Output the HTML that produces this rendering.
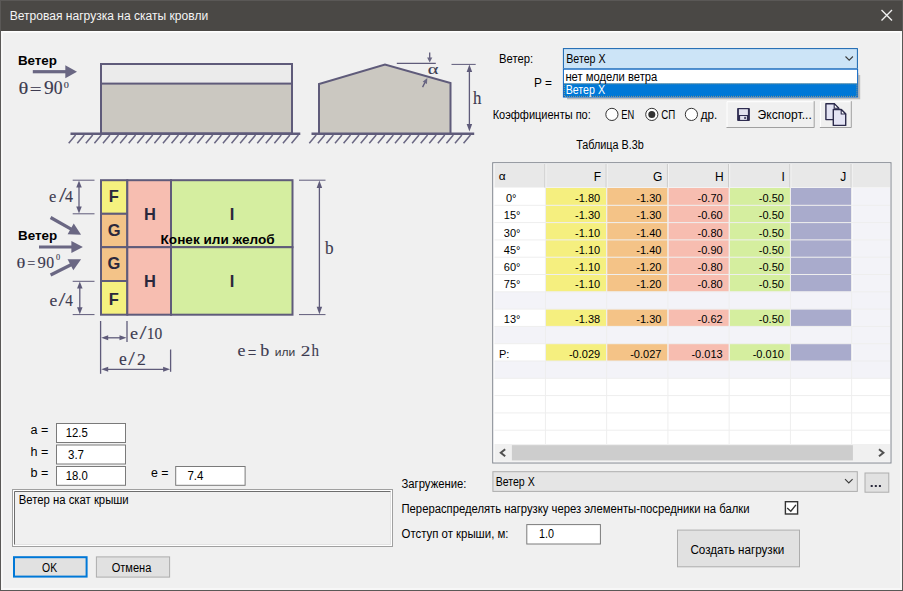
<!DOCTYPE html>
<html><head><meta charset="utf-8">
<style>
*{margin:0;padding:0;box-sizing:border-box}
html,body{width:903px;height:591px;overflow:hidden;background:#f0f0f0}
body{position:relative;font-family:"Liberation Sans",sans-serif;font-size:12px;color:#000}
svg{position:absolute;left:0;top:0}
</style></head><body>
<svg width="903" height="591" viewBox="0 0 903 591">
<rect x="0" y="0" width="903" height="591" fill="#f0f0f0"/>
<rect x="0" y="0" width="903" height="31" fill="#4a4845"/>
<rect x="0" y="0" width="903" height="1" fill="#5a5856"/>
<rect x="0" y="0" width="1" height="591" fill="#5a5856"/>
<rect x="902" y="0" width="1" height="591" fill="#5a5856"/>
<rect x="0" y="590" width="903" height="1" fill="#5a5856"/>
<rect x="1" y="31" width="901" height="1.5" fill="#ffffff"/>
<rect x="1" y="31" width="2" height="559" fill="#f7f7f7"/>
<rect x="900" y="31" width="2" height="559" fill="#f7f7f7"/>
<rect x="1" y="588" width="901" height="2" fill="#f7f7f7"/>
<text x="9.7" y="19.9" font-family="Liberation Sans" font-size="12" fill="#f4f4f4" textLength="198.5" lengthAdjust="spacingAndGlyphs">Ветровая нагрузка на скаты кровли</text>
<path d="M881.5 10 L892 20.5 M892 10 L881.5 20.5" stroke="#f0f0f0" stroke-width="1.4"/>
<text x="17.9" y="65" font-family="Liberation Sans" font-size="13" fill="#000" font-weight="bold" textLength="39.1" lengthAdjust="spacingAndGlyphs">Ветер</text>
<rect x="32.8" y="70.1" width="33.5" height="3.2" fill="#6a6783"/>
<path d="M77.00 71.70 L65.30 78.20 L65.30 65.20 Z" fill="#6a6783"/>
<text transform="translate(18.38,94.43) scale(1.214,1)" font-family="Liberation Serif" font-size="16.90" fill="#3d3b50" stroke="#3d3b50" stroke-width="0.12">θ</text>
<text transform="translate(29.86,95.06) scale(1.272,1)" font-family="Liberation Serif" font-size="16.40" fill="#3d3b50" stroke="#3d3b50" stroke-width="0.12">=</text>
<text transform="translate(43.91,94.42) scale(1.091,1)" font-family="Liberation Serif" font-size="17.91" fill="#3d3b50" stroke="#3d3b50" stroke-width="0.12">9</text>
<text transform="translate(53.80,94.42) scale(0.991,1)" font-family="Liberation Serif" font-size="17.78" fill="#3d3b50" stroke="#3d3b50" stroke-width="0.12">0</text>
<text transform="translate(63.69,87.62) scale(1.355,1)" font-family="Liberation Serif" font-size="7.56" fill="#3d3b50" stroke="#3d3b50" stroke-width="0.12">0</text>
<rect x="101" y="64" width="191" height="69.5" fill="#cbc8c1" stroke="#5f5b7a" stroke-width="2"/>
<rect x="101" y="64" width="191" height="19.6" fill="#ebebeb" stroke="#5f5b7a" stroke-width="2"/>
<line x1="70.5" y1="133.8" x2="300.3" y2="133.8" stroke="#5f5b7a" stroke-width="2.6"/>
<path d="M75.60 135.00 L68.70 143.30 M84.17 135.00 L77.27 143.30 M92.74 135.00 L85.84 143.30 M101.31 135.00 L94.41 143.30 M109.88 135.00 L102.98 143.30 M118.45 135.00 L111.55 143.30 M127.02 135.00 L120.12 143.30 M135.59 135.00 L128.69 143.30 M144.16 135.00 L137.26 143.30 M152.73 135.00 L145.83 143.30 M161.30 135.00 L154.40 143.30 M169.87 135.00 L162.97 143.30 M178.44 135.00 L171.54 143.30 M187.01 135.00 L180.11 143.30 M195.58 135.00 L188.68 143.30 M204.15 135.00 L197.25 143.30 M212.72 135.00 L205.82 143.30 M221.29 135.00 L214.39 143.30 M229.86 135.00 L222.96 143.30 M238.43 135.00 L231.53 143.30 M247.00 135.00 L240.10 143.30 M255.57 135.00 L248.67 143.30 M264.14 135.00 L257.24 143.30 M272.71 135.00 L265.81 143.30 M281.28 135.00 L274.38 143.30 M289.85 135.00 L282.95 143.30 M298.42 135.00 L291.52 143.30 " stroke="#6a6783" stroke-width="1.5" fill="none"/>
<path d="M319 133.5 L319 84 L385 64.5 L450.5 83 L450.5 133.5" fill="#cbc8c1" stroke="#5f5b7a" stroke-width="2"/>
<line x1="311.5" y1="133.8" x2="474.2" y2="133.8" stroke="#5f5b7a" stroke-width="2.6"/>
<path d="M316.20 135.00 L309.30 143.30 M324.77 135.00 L317.87 143.30 M333.34 135.00 L326.44 143.30 M341.91 135.00 L335.01 143.30 M350.48 135.00 L343.58 143.30 M359.05 135.00 L352.15 143.30 M367.62 135.00 L360.72 143.30 M376.19 135.00 L369.29 143.30 M384.76 135.00 L377.86 143.30 M393.33 135.00 L386.43 143.30 M401.90 135.00 L395.00 143.30 M410.47 135.00 L403.57 143.30 M419.04 135.00 L412.14 143.30 M427.61 135.00 L420.71 143.30 M436.18 135.00 L429.28 143.30 M444.75 135.00 L437.85 143.30 M453.32 135.00 L446.42 143.30 M461.89 135.00 L454.99 143.30 M470.46 135.00 L463.56 143.30 " stroke="#6a6783" stroke-width="1.5" fill="none"/>
<line x1="396.8" y1="63.4" x2="435.8" y2="63.4" stroke="#5f5b7a" stroke-width="1.3"/>
<line x1="429.7" y1="52.6" x2="429.7" y2="58.5" stroke="#5f5b7a" stroke-width="1.3"/>
<path d="M429.70 62.40 L427.10 57.40 L432.30 57.40 Z" fill="#6a6783"/>
<line x1="422.6" y1="87.1" x2="425" y2="82.4" stroke="#5f5b7a" stroke-width="1.3"/>
<path d="M427.30 78.00 L426.96 83.99 L422.68 81.83 Z" fill="#6a6783"/>
<text transform="translate(427.69,73.95) scale(1.386,1)" font-family="Liberation Serif" font-size="14.58" fill="#3d3b50" stroke="#3d3b50" stroke-width="0.12">α</text>
<line x1="451.5" y1="64.4" x2="475.7" y2="64.4" stroke="#5f5b7a" stroke-width="1"/>
<line x1="469.40" y1="70.60" x2="469.40" y2="125.50" stroke="#5f5b7a" stroke-width="1.3"/>
<path d="M469.40 131.50 L466.65 124.00 L472.15 124.00 Z" fill="#5f5b7a"/>
<path d="M469.40 64.60 L472.15 72.10 L466.65 72.10 Z" fill="#5f5b7a"/>
<text transform="translate(473.03,103.50) scale(0.929,1)" font-family="Liberation Serif" font-size="18.13" fill="#3d3b50" stroke="#3d3b50" stroke-width="0.12">h</text>
<g stroke="#5f5b7a" stroke-width="2">
<rect x="101" y="180.2" width="26.3" height="33.6" fill="#f5f17f"/>
<rect x="101" y="213.8" width="26.3" height="33.4" fill="#f3c388"/>
<rect x="101" y="247.2" width="26.3" height="33.8" fill="#f3c388"/>
<rect x="101" y="281" width="26.3" height="33.7" fill="#f5f17f"/>
<rect x="127.3" y="180.2" width="43.7" height="67" fill="#f7beb1"/>
<rect x="127.3" y="247.2" width="43.7" height="67.5" fill="#f7beb1"/>
<rect x="171" y="180.2" width="121.5" height="67" fill="#d5eea0"/>
<rect x="171" y="247.2" width="121.5" height="67.5" fill="#d5eea0"/>
</g>
<text x="113.9" y="202.4" font-family="Liberation Sans" font-size="16.5" fill="#2a283c" font-weight="bold" text-anchor="middle">F</text>
<text x="114.1" y="235.9" font-family="Liberation Sans" font-size="16.5" fill="#2a283c" font-weight="bold" text-anchor="middle">G</text>
<text x="114.0" y="269.4" font-family="Liberation Sans" font-size="16.5" fill="#2a283c" font-weight="bold" text-anchor="middle">G</text>
<text x="113.9" y="304.7" font-family="Liberation Sans" font-size="16.5" fill="#2a283c" font-weight="bold" text-anchor="middle">F</text>
<text x="149.9" y="220" font-family="Liberation Sans" font-size="16.5" fill="#2a283c" font-weight="bold" text-anchor="middle">H</text>
<text x="149.9" y="287.4" font-family="Liberation Sans" font-size="16.5" fill="#2a283c" font-weight="bold" text-anchor="middle">H</text>
<text x="232" y="220.1" font-family="Liberation Sans" font-size="16.5" fill="#2a283c" font-weight="bold" text-anchor="middle">I</text>
<text x="232" y="287.3" font-family="Liberation Sans" font-size="16.5" fill="#2a283c" font-weight="bold" text-anchor="middle">I</text>
<text x="160.6" y="243.7" font-family="Liberation Sans" font-size="12.8" fill="#000" font-weight="bold" textLength="114" lengthAdjust="spacingAndGlyphs">Конек или желоб</text>
<line x1="72.7" y1="180.2" x2="94.5" y2="180.2" stroke="#5f5b7a" stroke-width="1"/>
<line x1="72.7" y1="213.8" x2="94.5" y2="213.8" stroke="#5f5b7a" stroke-width="1"/>
<line x1="79.00" y1="186.10" x2="79.00" y2="207.90" stroke="#5f5b7a" stroke-width="1.3"/>
<path d="M79.00 213.50 L76.25 206.50 L81.75 206.50 Z" fill="#5f5b7a"/>
<path d="M79.00 180.50 L81.75 187.50 L76.25 187.50 Z" fill="#5f5b7a"/>
<text transform="translate(49.04,202.42) scale(0.942,1)" font-family="Liberation Serif" font-size="17.50" fill="#3d3b50" stroke="#3d3b50" stroke-width="0.12">e</text>
<text transform="translate(59.00,202.19) scale(1.271,1)" font-family="Liberation Serif" font-size="20.60" fill="#3d3b50" stroke="#3d3b50" stroke-width="0.12">/</text>
<text transform="translate(64.88,202.40) scale(0.964,1)" font-family="Liberation Serif" font-size="16.52" fill="#3d3b50" stroke="#3d3b50" stroke-width="0.12">4</text>
<line x1="72.7" y1="281.3" x2="94.5" y2="281.3" stroke="#5f5b7a" stroke-width="1"/>
<line x1="72.7" y1="314.6" x2="94.5" y2="314.6" stroke="#5f5b7a" stroke-width="1"/>
<line x1="79.80" y1="287.20" x2="79.80" y2="308.70" stroke="#5f5b7a" stroke-width="1.3"/>
<path d="M79.80 314.30 L77.05 307.30 L82.55 307.30 Z" fill="#5f5b7a"/>
<path d="M79.80 281.60 L82.55 288.60 L77.05 288.60 Z" fill="#5f5b7a"/>
<text transform="translate(49.50,306.33) scale(1.028,1)" font-family="Liberation Serif" font-size="17.08" fill="#3d3b50" stroke="#3d3b50" stroke-width="0.12">e</text>
<text transform="translate(58.60,306.32) scale(1.401,1)" font-family="Liberation Serif" font-size="17.91" fill="#3d3b50" stroke="#3d3b50" stroke-width="0.12">/</text>
<text transform="translate(65.19,306.30) scale(0.960,1)" font-family="Liberation Serif" font-size="15.91" fill="#3d3b50" stroke="#3d3b50" stroke-width="0.12">4</text>
<text x="18.1" y="239.9" font-family="Liberation Sans" font-size="12.5" fill="#000" font-weight="bold" textLength="39.1" lengthAdjust="spacingAndGlyphs">Ветер</text>
<line x1="39" y1="247" x2="72" y2="247" stroke="#6a6783" stroke-width="3.2"/>
<path d="M82.90 247.00 L71.40 253.00 L71.40 241.00 Z" fill="#6a6783"/>
<line x1="50.6" y1="217.5" x2="72" y2="229.7" stroke="#6a6783" stroke-width="3.2"/>
<path d="M81.10 234.80 L67.58 234.32 L73.75 223.44 Z" fill="#6a6783"/>
<line x1="50.6" y1="275" x2="72" y2="264.3" stroke="#6a6783" stroke-width="3.2"/>
<path d="M81.10 259.20 L73.32 270.27 L67.57 259.17 Z" fill="#6a6783"/>
<text transform="translate(16.47,267.65) scale(1.214,1)" font-family="Liberation Serif" font-size="15.21" fill="#3d3b50" stroke="#3d3b50" stroke-width="0.12">θ</text>
<text transform="translate(27.19,267.82) scale(0.934,1)" font-family="Liberation Serif" font-size="15.20" fill="#3d3b50" stroke="#3d3b50" stroke-width="0.12">=</text>
<text transform="translate(37.60,267.64) scale(1.039,1)" font-family="Liberation Serif" font-size="16.12" fill="#3d3b50" stroke="#3d3b50" stroke-width="0.12">9</text>
<text transform="translate(46.37,267.64) scale(0.982,1)" font-family="Liberation Serif" font-size="16.00" fill="#3d3b50" stroke="#3d3b50" stroke-width="0.12">0</text>
<text transform="translate(56.07,260.23) scale(1.125,1)" font-family="Liberation Serif" font-size="7.41" fill="#3d3b50" stroke="#3d3b50" stroke-width="0.12">0</text>
<line x1="299" y1="180.2" x2="325.5" y2="180.2" stroke="#5f5b7a" stroke-width="1"/>
<line x1="299" y1="314.6" x2="325.5" y2="314.6" stroke="#5f5b7a" stroke-width="1"/>
<line x1="319.40" y1="186.50" x2="319.40" y2="308.30" stroke="#5f5b7a" stroke-width="1.3"/>
<path d="M319.40 314.30 L316.65 306.80 L322.15 306.80 Z" fill="#5f5b7a"/>
<path d="M319.40 180.50 L322.15 188.00 L316.65 188.00 Z" fill="#5f5b7a"/>
<text transform="translate(324.90,254.12) scale(0.953,1)" font-family="Liberation Serif" font-size="18.01" fill="#3d3b50" stroke="#3d3b50" stroke-width="0.12">b</text>
<line x1="100.6" y1="321" x2="100.6" y2="373.8" stroke="#5f5b7a" stroke-width="1.3"/>
<line x1="127" y1="321" x2="127" y2="341.9" stroke="#5f5b7a" stroke-width="1.3"/>
<line x1="106.80" y1="337.80" x2="120.90" y2="337.80" stroke="#5f5b7a" stroke-width="1.3"/>
<path d="M126.50 337.80 L119.50 340.30 L119.50 335.30 Z" fill="#5f5b7a"/>
<path d="M101.20 337.80 L108.20 335.30 L108.20 340.30 Z" fill="#5f5b7a"/>
<text transform="translate(129.88,338.82) scale(1.023,1)" font-family="Liberation Serif" font-size="17.71" fill="#3d3b50" stroke="#3d3b50" stroke-width="0.12">e</text>
<text transform="translate(139.50,338.82) scale(1.409,1)" font-family="Liberation Serif" font-size="18.06" fill="#3d3b50" stroke="#3d3b50" stroke-width="0.12">/</text>
<text transform="translate(146.78,338.80) scale(0.938,1)" font-family="Liberation Serif" font-size="16.52" fill="#3d3b50" stroke="#3d3b50" stroke-width="0.12">1</text>
<text transform="translate(154.58,338.84) scale(0.941,1)" font-family="Liberation Serif" font-size="16.44" fill="#3d3b50" stroke="#3d3b50" stroke-width="0.12">0</text>
<line x1="170.6" y1="349.5" x2="170.6" y2="371.8" stroke="#5f5b7a" stroke-width="1.3"/>
<line x1="106.80" y1="369.30" x2="164.50" y2="369.30" stroke="#5f5b7a" stroke-width="1.3"/>
<path d="M170.10 369.30 L163.10 371.80 L163.10 366.80 Z" fill="#5f5b7a"/>
<path d="M101.20 369.30 L108.20 366.80 L108.20 371.80 Z" fill="#5f5b7a"/>
<text transform="translate(119.00,365.22) scale(0.969,1)" font-family="Liberation Serif" font-size="18.12" fill="#3d3b50" stroke="#3d3b50" stroke-width="0.12">e</text>
<text transform="translate(128.30,365.22) scale(1.309,1)" font-family="Liberation Serif" font-size="18.06" fill="#3d3b50" stroke="#3d3b50" stroke-width="0.12">/</text>
<text transform="translate(137.10,365.40) scale(1.055,1)" font-family="Liberation Serif" font-size="16.82" fill="#3d3b50" stroke="#3d3b50" stroke-width="0.12">2</text>
<text transform="translate(237.39,356.13) scale(1.032,1)" font-family="Liberation Serif" font-size="17.29" fill="#3d3b50" stroke="#3d3b50" stroke-width="0.12">e</text>
<text transform="translate(247.84,358.62) scale(0.779,1)" font-family="Liberation Serif" font-size="19.60" fill="#3d3b50" stroke="#3d3b50" stroke-width="0.12">=</text>
<text transform="translate(260.20,356.13) scale(1.051,1)" font-family="Liberation Serif" font-size="17.16" fill="#3d3b50" stroke="#3d3b50" stroke-width="0.12">b</text>
<text transform="translate(274.86,356.20) scale(1.183,1)" font-family="Liberation Sans" font-size="10.19" fill="#3a3a44" stroke="#3a3a44" stroke-width="0">или</text>
<text transform="translate(300.83,356.30) scale(1.270,1)" font-family="Liberation Serif" font-size="15.15" fill="#3d3b50" stroke="#3d3b50" stroke-width="0.12">2</text>
<text transform="translate(311.55,356.30) scale(0.859,1)" font-family="Liberation Serif" font-size="17.41" fill="#3d3b50" stroke="#3d3b50" stroke-width="0.12">h</text>
<text x="499" y="63.2" font-family="Liberation Sans" font-size="12" fill="#000" textLength="34.1" lengthAdjust="spacingAndGlyphs">Ветер:</text>
<text x="534" y="87.2" font-family="Liberation Sans" font-size="12" fill="#000" textLength="17.9" lengthAdjust="spacingAndGlyphs">P =</text>
<rect x="563.4" y="48.6" width="294" height="20" fill="#cce4f7" stroke="#1464b0" stroke-width="1"/>
<text x="566.2" y="62.8" font-family="Liberation Sans" font-size="12" fill="#000" textLength="39.4" lengthAdjust="spacingAndGlyphs">Ветер X</text>
<path d="M845.5 56.5 L849.2 60.2 L852.9 56.5" fill="none" stroke="#3b3b3b" stroke-width="1.1"/>
<rect x="858" y="75" width="2.2" height="24.3" fill="#000" opacity="0.22"/>
<rect x="567" y="97.3" width="291" height="2" fill="#000" opacity="0.22"/>
<rect x="858" y="73" width="1" height="2" fill="#000" opacity="0.1"/>
<rect x="562.9" y="68.7" width="295" height="28.6" fill="#fff"/>
<rect x="563.4" y="83.3" width="294" height="13.8" fill="#0078d7"/>
<rect x="563.4" y="69.2" width="294.2" height="27.8" fill="none" stroke="#0a64c4" stroke-width="1"/>
<rect x="564.4" y="83.8" width="292.5" height="12.6" fill="none" stroke="#f0b050" stroke-width="0.8" stroke-dasharray="1 1" opacity="0.8"/>
<text x="565.4" y="81.4" font-family="Liberation Sans" font-size="12" fill="#000" textLength="91.9" lengthAdjust="spacingAndGlyphs">нет модели ветра</text>
<text x="565.7" y="94.3" font-family="Liberation Sans" font-size="12" fill="#fff" textLength="39.3" lengthAdjust="spacingAndGlyphs">Ветер X</text>
<text x="492.7" y="119.4" font-family="Liberation Sans" font-size="12" fill="#000" textLength="98.1" lengthAdjust="spacingAndGlyphs">Коэффициенты по:</text>
<circle cx="611.9" cy="114.4" r="6.1" fill="#fff" stroke="#333" stroke-width="1"/>
<text x="621.3" y="118.9" font-family="Liberation Sans" font-size="12" fill="#000" textLength="13" lengthAdjust="spacingAndGlyphs">EN</text>
<circle cx="651.8" cy="114.4" r="6.1" fill="#fff" stroke="#333" stroke-width="1"/>
<circle cx="651.8" cy="114.4" r="3.5" fill="#333"/>
<text x="661.2" y="118.9" font-family="Liberation Sans" font-size="12" fill="#000" textLength="14" lengthAdjust="spacingAndGlyphs">СП</text>
<circle cx="691.4" cy="114.4" r="6.1" fill="#fff" stroke="#333" stroke-width="1"/>
<text x="700.8" y="118.9" font-family="Liberation Sans" font-size="12" fill="#000" textLength="16.5" lengthAdjust="spacingAndGlyphs">др.</text>
<rect x="726.5" y="101.2" width="88.20000000000005" height="26.799999999999997" fill="#f0f0f0"/>
<path d="M727.0 127 L727.0 101.7 L813.7 101.7" stroke="#ffffff" fill="none"/>
<path d="M726.5 127.5 L814.2 127.5 L814.2 101.2" stroke="#a0a0a0" fill="none"/>
<rect x="819.9" y="101.2" width="31.899999999999977" height="26.799999999999997" fill="#f0f0f0"/>
<path d="M820.4 127 L820.4 101.7 L850.8 101.7" stroke="#ffffff" fill="none"/>
<path d="M819.9 127.5 L851.3 127.5 L851.3 101.2" stroke="#a0a0a0" fill="none"/>
<rect x="737.1" y="108.1" width="12.8" height="12.8" rx="0.9" fill="#2e2c50"/>
<rect x="738.9" y="109.2" width="9" height="5.8" fill="#e2e2ee"/>
<rect x="740.1" y="116" width="6.8" height="3.9" fill="#e2e2ee"/>
<rect x="744.3" y="116.8" width="1.5" height="2.2" fill="#2e2c50"/>
<text x="757.6" y="119.4" font-family="Liberation Sans" font-size="12" fill="#000" textLength="54.2" lengthAdjust="spacingAndGlyphs">Экспорт...</text>
<path d="M825.9 103.7 L834.2 103.7 L838.7 108.2 L838.7 119.6 L825.9 119.6 Z" fill="#e4e4f4" stroke="#2c2b4c" stroke-width="1.4" stroke-linejoin="round"/>
<path d="M834.2 103.7 L834.2 108.2 L838.7 108.2 Z" fill="#ffffff" stroke="#2c2b4c" stroke-width="1.1" stroke-linejoin="round"/>
<path d="M833.3 109.5 L841.2 109.5 L845.7 114 L845.7 125.4 L833.3 125.4 Z" fill="#e4e4f4" stroke="#2c2b4c" stroke-width="1.4" stroke-linejoin="round"/>
<path d="M841.2 109.5 L841.2 114 L845.7 114 Z" fill="#ffffff" stroke="#2c2b4c" stroke-width="1.1" stroke-linejoin="round"/>
<text x="576.2" y="148.6" font-family="Liberation Sans" font-size="12" fill="#000" textLength="67.6" lengthAdjust="spacingAndGlyphs">Таблица B.3b</text>
<rect x="492.7" y="162.7" width="398.3" height="300.3" fill="#ffffff" stroke="#828790" stroke-width="1"/>
<rect x="494.5" y="164" width="395.5" height="23.5" fill="#e8e8e8"/>
<rect x="544.4" y="164" width="1" height="23.5" fill="#c8c8c8"/>
<rect x="545.4" y="164" width="1" height="23.5" fill="#f4f4f4"/>
<rect x="605.65" y="164" width="1" height="23.5" fill="#c8c8c8"/>
<rect x="606.65" y="164" width="1" height="23.5" fill="#f4f4f4"/>
<rect x="666.9" y="164" width="1" height="23.5" fill="#c8c8c8"/>
<rect x="667.9" y="164" width="1" height="23.5" fill="#f4f4f4"/>
<rect x="728.15" y="164" width="1" height="23.5" fill="#c8c8c8"/>
<rect x="729.15" y="164" width="1" height="23.5" fill="#f4f4f4"/>
<rect x="789.4" y="164" width="1" height="23.5" fill="#c8c8c8"/>
<rect x="790.4" y="164" width="1" height="23.5" fill="#f4f4f4"/>
<rect x="850.65" y="164" width="1" height="23.5" fill="#c8c8c8"/>
<rect x="851.65" y="164" width="1" height="23.5" fill="#f4f4f4"/>
<text transform="translate(498.82,180.19) scale(1.096,1)" font-family="Liberation Sans" font-size="10.91" fill="#000" stroke="#000" stroke-width="0">α</text>
<text x="601.15" y="180.6" font-family="Liberation Sans" font-size="12" fill="#000" text-anchor="end">F</text>
<text x="662.4" y="180.6" font-family="Liberation Sans" font-size="12" fill="#000" text-anchor="end">G</text>
<text x="723.65" y="180.6" font-family="Liberation Sans" font-size="12" fill="#000" text-anchor="end">H</text>
<text x="784.9" y="180.6" font-family="Liberation Sans" font-size="12" fill="#000" text-anchor="end">I</text>
<text x="846.15" y="180.6" font-family="Liberation Sans" font-size="12" fill="#000" text-anchor="end">J</text>
<rect x="852.65" y="188.00" width="37.35" height="17.30" fill="#f3f3f8"/>
<rect x="545.90" y="188.00" width="60.5" height="17.30" fill="#f5ef7f"/>
<rect x="607.15" y="188.00" width="60.5" height="17.30" fill="#f4c387"/>
<rect x="668.40" y="188.00" width="60.5" height="17.30" fill="#f7bdb0"/>
<rect x="729.65" y="188.00" width="60.5" height="17.30" fill="#d5ee9f"/>
<rect x="790.90" y="188.00" width="60.5" height="17.30" fill="#a9abcc"/>
<rect x="852.65" y="205.30" width="37.35" height="17.30" fill="#f3f3f8"/>
<rect x="545.90" y="205.30" width="60.5" height="17.30" fill="#f5ef7f"/>
<rect x="607.15" y="205.30" width="60.5" height="17.30" fill="#f4c387"/>
<rect x="668.40" y="205.30" width="60.5" height="17.30" fill="#f7bdb0"/>
<rect x="729.65" y="205.30" width="60.5" height="17.30" fill="#d5ee9f"/>
<rect x="790.90" y="205.30" width="60.5" height="17.30" fill="#a9abcc"/>
<rect x="852.65" y="222.60" width="37.35" height="17.30" fill="#f3f3f8"/>
<rect x="545.90" y="222.60" width="60.5" height="17.30" fill="#f5ef7f"/>
<rect x="607.15" y="222.60" width="60.5" height="17.30" fill="#f4c387"/>
<rect x="668.40" y="222.60" width="60.5" height="17.30" fill="#f7bdb0"/>
<rect x="729.65" y="222.60" width="60.5" height="17.30" fill="#d5ee9f"/>
<rect x="790.90" y="222.60" width="60.5" height="17.30" fill="#a9abcc"/>
<rect x="852.65" y="239.90" width="37.35" height="17.30" fill="#f3f3f8"/>
<rect x="545.90" y="239.90" width="60.5" height="17.30" fill="#f5ef7f"/>
<rect x="607.15" y="239.90" width="60.5" height="17.30" fill="#f4c387"/>
<rect x="668.40" y="239.90" width="60.5" height="17.30" fill="#f7bdb0"/>
<rect x="729.65" y="239.90" width="60.5" height="17.30" fill="#d5ee9f"/>
<rect x="790.90" y="239.90" width="60.5" height="17.30" fill="#a9abcc"/>
<rect x="852.65" y="257.20" width="37.35" height="17.30" fill="#f3f3f8"/>
<rect x="545.90" y="257.20" width="60.5" height="17.30" fill="#f5ef7f"/>
<rect x="607.15" y="257.20" width="60.5" height="17.30" fill="#f4c387"/>
<rect x="668.40" y="257.20" width="60.5" height="17.30" fill="#f7bdb0"/>
<rect x="729.65" y="257.20" width="60.5" height="17.30" fill="#d5ee9f"/>
<rect x="790.90" y="257.20" width="60.5" height="17.30" fill="#a9abcc"/>
<rect x="852.65" y="274.50" width="37.35" height="17.30" fill="#f3f3f8"/>
<rect x="545.90" y="274.50" width="60.5" height="17.30" fill="#f5ef7f"/>
<rect x="607.15" y="274.50" width="60.5" height="17.30" fill="#f4c387"/>
<rect x="668.40" y="274.50" width="60.5" height="17.30" fill="#f7bdb0"/>
<rect x="729.65" y="274.50" width="60.5" height="17.30" fill="#d5ee9f"/>
<rect x="790.90" y="274.50" width="60.5" height="17.30" fill="#a9abcc"/>
<rect x="494.5" y="291.80" width="395.5" height="17.30" fill="#f3f3f8"/>
<rect x="852.65" y="309.10" width="37.35" height="17.30" fill="#f3f3f8"/>
<rect x="545.90" y="309.10" width="60.5" height="17.30" fill="#f5ef7f"/>
<rect x="607.15" y="309.10" width="60.5" height="17.30" fill="#f4c387"/>
<rect x="668.40" y="309.10" width="60.5" height="17.30" fill="#f7bdb0"/>
<rect x="729.65" y="309.10" width="60.5" height="17.30" fill="#d5ee9f"/>
<rect x="790.90" y="309.10" width="60.5" height="17.30" fill="#a9abcc"/>
<rect x="494.5" y="326.40" width="395.5" height="17.30" fill="#f3f3f8"/>
<rect x="852.65" y="343.70" width="37.35" height="17.30" fill="#f3f3f8"/>
<rect x="545.90" y="343.70" width="60.5" height="17.30" fill="#f5ef7f"/>
<rect x="607.15" y="343.70" width="60.5" height="17.30" fill="#f4c387"/>
<rect x="668.40" y="343.70" width="60.5" height="17.30" fill="#f7bdb0"/>
<rect x="729.65" y="343.70" width="60.5" height="17.30" fill="#d5ee9f"/>
<rect x="790.90" y="343.70" width="60.5" height="17.30" fill="#a9abcc"/>
<rect x="494.5" y="361.00" width="395.5" height="17.30" fill="#f3f3f8"/>
<rect x="494.5" y="204.80" width="395.5" height="1" fill="#eeeeee"/>
<rect x="494.5" y="222.10" width="395.5" height="1" fill="#eeeeee"/>
<rect x="494.5" y="239.40" width="395.5" height="1" fill="#eeeeee"/>
<rect x="494.5" y="256.70" width="395.5" height="1" fill="#eeeeee"/>
<rect x="494.5" y="274.00" width="395.5" height="1" fill="#eeeeee"/>
<rect x="494.5" y="291.30" width="395.5" height="1" fill="#eeeeee"/>
<rect x="494.5" y="308.60" width="395.5" height="1" fill="#eeeeee"/>
<rect x="494.5" y="325.90" width="395.5" height="1" fill="#eeeeee"/>
<rect x="494.5" y="343.20" width="395.5" height="1" fill="#eeeeee"/>
<rect x="494.5" y="360.50" width="395.5" height="1" fill="#eeeeee"/>
<rect x="494.5" y="377.80" width="395.5" height="1" fill="#eeeeee"/>
<rect x="494.5" y="395.10" width="395.5" height="1" fill="#eeeeee"/>
<rect x="494.5" y="412.40" width="395.5" height="1" fill="#eeeeee"/>
<rect x="494.5" y="429.70" width="395.5" height="1" fill="#eeeeee"/>
<rect x="544.90" y="188" width="1" height="256" fill="#eeeeee"/>
<rect x="606.15" y="188" width="1" height="256" fill="#eeeeee"/>
<rect x="667.40" y="188" width="1" height="256" fill="#eeeeee"/>
<rect x="728.65" y="188" width="1" height="256" fill="#eeeeee"/>
<rect x="789.90" y="188" width="1" height="256" fill="#eeeeee"/>
<rect x="851.15" y="188" width="1" height="256" fill="#eeeeee"/>
<text x="506" y="201.9" font-family="Liberation Sans" font-size="11" fill="#000">0°</text>
<text x="600.15" y="201.9" font-family="Liberation Sans" font-size="11" fill="#000" text-anchor="end">-1.80</text>
<text x="661.4" y="201.9" font-family="Liberation Sans" font-size="11" fill="#000" text-anchor="end">-1.30</text>
<text x="722.65" y="201.9" font-family="Liberation Sans" font-size="11" fill="#000" text-anchor="end">-0.70</text>
<text x="783.9" y="201.9" font-family="Liberation Sans" font-size="11" fill="#000" text-anchor="end">-0.50</text>
<text x="503.8" y="219.20000000000002" font-family="Liberation Sans" font-size="11" fill="#000">15°</text>
<text x="600.15" y="219.20000000000002" font-family="Liberation Sans" font-size="11" fill="#000" text-anchor="end">-1.30</text>
<text x="661.4" y="219.20000000000002" font-family="Liberation Sans" font-size="11" fill="#000" text-anchor="end">-1.30</text>
<text x="722.65" y="219.20000000000002" font-family="Liberation Sans" font-size="11" fill="#000" text-anchor="end">-0.60</text>
<text x="783.9" y="219.20000000000002" font-family="Liberation Sans" font-size="11" fill="#000" text-anchor="end">-0.50</text>
<text x="503.8" y="236.5" font-family="Liberation Sans" font-size="11" fill="#000">30°</text>
<text x="600.15" y="236.5" font-family="Liberation Sans" font-size="11" fill="#000" text-anchor="end">-1.10</text>
<text x="661.4" y="236.5" font-family="Liberation Sans" font-size="11" fill="#000" text-anchor="end">-1.40</text>
<text x="722.65" y="236.5" font-family="Liberation Sans" font-size="11" fill="#000" text-anchor="end">-0.80</text>
<text x="783.9" y="236.5" font-family="Liberation Sans" font-size="11" fill="#000" text-anchor="end">-0.50</text>
<text x="503.8" y="253.8" font-family="Liberation Sans" font-size="11" fill="#000">45°</text>
<text x="600.15" y="253.8" font-family="Liberation Sans" font-size="11" fill="#000" text-anchor="end">-1.10</text>
<text x="661.4" y="253.8" font-family="Liberation Sans" font-size="11" fill="#000" text-anchor="end">-1.40</text>
<text x="722.65" y="253.8" font-family="Liberation Sans" font-size="11" fill="#000" text-anchor="end">-0.90</text>
<text x="783.9" y="253.8" font-family="Liberation Sans" font-size="11" fill="#000" text-anchor="end">-0.50</text>
<text x="503.8" y="271.09999999999997" font-family="Liberation Sans" font-size="11" fill="#000">60°</text>
<text x="600.15" y="271.09999999999997" font-family="Liberation Sans" font-size="11" fill="#000" text-anchor="end">-1.10</text>
<text x="661.4" y="271.09999999999997" font-family="Liberation Sans" font-size="11" fill="#000" text-anchor="end">-1.20</text>
<text x="722.65" y="271.09999999999997" font-family="Liberation Sans" font-size="11" fill="#000" text-anchor="end">-0.80</text>
<text x="783.9" y="271.09999999999997" font-family="Liberation Sans" font-size="11" fill="#000" text-anchor="end">-0.50</text>
<text x="503.8" y="288.4" font-family="Liberation Sans" font-size="11" fill="#000">75°</text>
<text x="600.15" y="288.4" font-family="Liberation Sans" font-size="11" fill="#000" text-anchor="end">-1.10</text>
<text x="661.4" y="288.4" font-family="Liberation Sans" font-size="11" fill="#000" text-anchor="end">-1.20</text>
<text x="722.65" y="288.4" font-family="Liberation Sans" font-size="11" fill="#000" text-anchor="end">-0.80</text>
<text x="783.9" y="288.4" font-family="Liberation Sans" font-size="11" fill="#000" text-anchor="end">-0.50</text>
<text x="503.8" y="323.0" font-family="Liberation Sans" font-size="11" fill="#000">13°</text>
<text x="600.15" y="323.0" font-family="Liberation Sans" font-size="11" fill="#000" text-anchor="end">-1.38</text>
<text x="661.4" y="323.0" font-family="Liberation Sans" font-size="11" fill="#000" text-anchor="end">-1.30</text>
<text x="722.65" y="323.0" font-family="Liberation Sans" font-size="11" fill="#000" text-anchor="end">-0.62</text>
<text x="783.9" y="323.0" font-family="Liberation Sans" font-size="11" fill="#000" text-anchor="end">-0.50</text>
<text x="499" y="357.6" font-family="Liberation Sans" font-size="11" fill="#000">P:</text>
<text x="600.15" y="357.6" font-family="Liberation Sans" font-size="11" fill="#000" text-anchor="end">-0.029</text>
<text x="661.4" y="357.6" font-family="Liberation Sans" font-size="11" fill="#000" text-anchor="end">-0.027</text>
<text x="722.65" y="357.6" font-family="Liberation Sans" font-size="11" fill="#000" text-anchor="end">-0.013</text>
<text x="783.9" y="357.6" font-family="Liberation Sans" font-size="11" fill="#000" text-anchor="end">-0.010</text>
<rect x="494.5" y="444" width="395.5" height="17.8" fill="#f0f0f0"/>
<rect x="511.9" y="445.2" width="341" height="15.2" fill="#cdcdcd"/>
<path d="M505.2 449.3 L500.8 452.8 L505.2 456.3" fill="none" stroke="#505050" stroke-width="2"/>
<path d="M879 449.3 L883.4 452.8 L879 456.3" fill="none" stroke="#505050" stroke-width="2"/>
<text x="30.6" y="433.8" font-family="Liberation Sans" font-size="12" fill="#000" textLength="17.8" lengthAdjust="spacingAndGlyphs">a =</text>
<rect x="56.5" y="423.5" width="69" height="19" fill="#fff" stroke="#7a7a7a" stroke-width="1"/>
<text x="65.8" y="436.8" font-family="Liberation Sans" font-size="12" fill="#000" textLength="22" lengthAdjust="spacingAndGlyphs">12.5</text>
<text x="30.6" y="455.6" font-family="Liberation Sans" font-size="12" fill="#000" textLength="17.8" lengthAdjust="spacingAndGlyphs">h =</text>
<rect x="56.5" y="445.0" width="69" height="19.0" fill="#fff" stroke="#7a7a7a" stroke-width="1"/>
<text x="68" y="458.8" font-family="Liberation Sans" font-size="12" fill="#000" textLength="16" lengthAdjust="spacingAndGlyphs">3.7</text>
<text x="30.6" y="477.3" font-family="Liberation Sans" font-size="12" fill="#000" textLength="17.8" lengthAdjust="spacingAndGlyphs">b =</text>
<rect x="56.5" y="466.5" width="69" height="18.80000000000001" fill="#fff" stroke="#7a7a7a" stroke-width="1"/>
<text x="65.8" y="480.1" font-family="Liberation Sans" font-size="12" fill="#000" textLength="22" lengthAdjust="spacingAndGlyphs">18.0</text>
<text x="151" y="477.3" font-family="Liberation Sans" font-size="12" fill="#000" textLength="17.5" lengthAdjust="spacingAndGlyphs">e =</text>
<rect x="175.7" y="466.5" width="69.4" height="18.80000000000001" fill="#fff" stroke="#7a7a7a" stroke-width="1"/>
<text x="187.4" y="480.1" font-family="Liberation Sans" font-size="12" fill="#000" textLength="16" lengthAdjust="spacingAndGlyphs">7.4</text>
<rect x="12.5" y="489.5" width="380" height="57" fill="#f0f0f0" stroke="#a0a0a0" stroke-width="1"/>
<rect x="13.5" y="490.5" width="378" height="55" fill="none" stroke="#ffffff" stroke-width="1"/>
<path d="M14.5 544.5 L14.5 491.5 L390.5 491.5" fill="none" stroke="#6d6d6d" stroke-width="1"/>
<path d="M15 544.5 L390.5 544.5 L390.5 492" fill="none" stroke="#e3e3e3" stroke-width="1"/>
<text x="18.7" y="504.2" font-family="Liberation Sans" font-size="12" fill="#000" textLength="110" lengthAdjust="spacingAndGlyphs">Ветер на скат крыши</text>
<rect x="14" y="557.2" width="72.6" height="19.4" fill="#e1e1e1" stroke="#0078d7" stroke-width="2"/>
<text x="49.6" y="571.9" font-family="Liberation Sans" font-size="12" fill="#000" textLength="15" lengthAdjust="spacingAndGlyphs" text-anchor="middle">OK</text>
<rect x="96.4" y="556.9" width="73.2" height="20.2" fill="#e1e1e1" stroke="#adadad" stroke-width="1"/>
<text x="131.5" y="571.9" font-family="Liberation Sans" font-size="12" fill="#000" textLength="39.6" lengthAdjust="spacingAndGlyphs" text-anchor="middle">Отмена</text>
<text x="401.5" y="488.4" font-family="Liberation Sans" font-size="12" fill="#000" textLength="64.9" lengthAdjust="spacingAndGlyphs">Загружение:</text>
<rect x="492.9" y="471.7" width="364.4" height="19.69999999999999" fill="#e5e5e5" stroke="#adadad" stroke-width="1"/>
<text x="495.7" y="486.1" font-family="Liberation Sans" font-size="12" fill="#000" textLength="39" lengthAdjust="spacingAndGlyphs">Ветер X</text>
<path d="M845 479.2 L848.8 483 L852.6 479.2" fill="none" stroke="#3b3b3b" stroke-width="1.1"/>
<rect x="865.0" y="473.0" width="23.799999999999955" height="19.19999999999999" fill="#e1e1e1" stroke="#adadad" stroke-width="1"/>
<g fill="#2a2a3c"><rect x="870.7" y="485" width="2" height="2"/><rect x="874.8" y="485" width="2" height="2"/><rect x="878.9" y="485" width="2" height="2"/></g>
<text x="401.5" y="512.7" font-family="Liberation Sans" font-size="12" fill="#000" textLength="348" lengthAdjust="spacingAndGlyphs">Перераспределять нагрузку через элементы-посредники на балки</text>
<rect x="785.4" y="501.7" width="12.2" height="12.3" fill="#fff" stroke="#333" stroke-width="1.4"/>
<path d="M787.2 508.1 L790.8 511.3 L795.9 504.9" fill="none" stroke="#333" stroke-width="1.4"/>
<text x="401.5" y="537.7" font-family="Liberation Sans" font-size="12" fill="#000" textLength="107" lengthAdjust="spacingAndGlyphs">Отступ от крыши, м:</text>
<rect x="526.8" y="524.6" width="73.60000000000002" height="19.399999999999977" fill="#fff" stroke="#7a7a7a" stroke-width="1"/>
<text x="539" y="538.2" font-family="Liberation Sans" font-size="12" fill="#000" textLength="15" lengthAdjust="spacingAndGlyphs">1.0</text>
<rect x="677.5" y="530.1" width="122" height="36.69999999999993" fill="#e1e1e1" stroke="#adadad" stroke-width="1"/>
<text x="690.4" y="554.3" font-family="Liberation Sans" font-size="12" fill="#000" textLength="93.9" lengthAdjust="spacingAndGlyphs">Создать нагрузки</text>
</svg>
</body></html>
